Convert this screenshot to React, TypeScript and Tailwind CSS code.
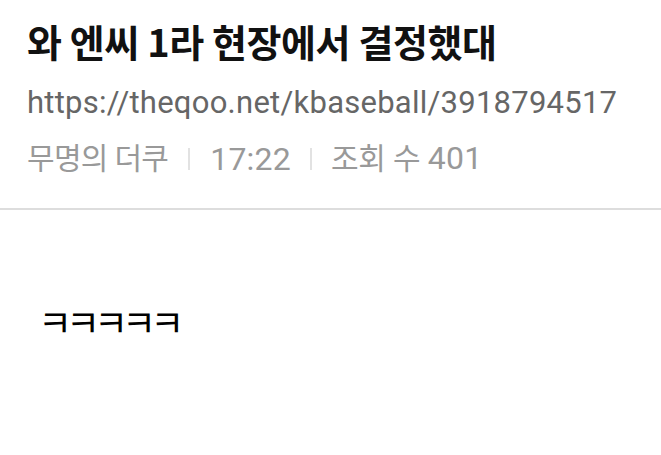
export default function App() {
  const sans = "font-['Roboto','Noto_Sans_CJK_KR',sans-serif]";
  return (
    <div className="h-[455px] w-[661px] overflow-hidden bg-white">
      <div className="px-[27px] pt-[15px] pb-[29px]">
        <h1 className="font-['Noto_Sans_CJK_KR',sans-serif] text-[38px] font-bold leading-[52px] tracking-[-0.4px] text-[#111]">
          와 엔씨 1라 현장에서 결정했대
        </h1>
        <div className={`${sans} mt-[16px] text-[31px] leading-[40px] tracking-[0.25px] text-[#666]`}>
          https://theqoo.net/kbaseball/3918794517
        </div>
        <div className={`${sans} mt-[15px] flex items-center text-[30px] leading-[40px] text-[#999]`}>
          <span className="tracking-[-0.7px]">무명의 더쿠</span>
          <span className="mx-[20px] h-[22px] w-[2px] bg-[#e2e2e2]" />
          <span className="text-[32px] tracking-[0.2px]">17:22</span>
          <span className="mx-[19px] h-[22px] w-[2px] bg-[#e2e2e2]" />
          <span className="tracking-[-0.2px]">
            조회 수 <span className="text-[32px] tracking-[0.3px]">401</span>
          </span>
        </div>
      </div>
      <div className="h-[2px] bg-[#dddddd]" />
      <div className="px-[38px] pt-[91px] font-['Noto_Sans_CJK_KR',sans-serif] text-[37px] leading-[40px] tracking-[-6px] text-black">
        ㅋㅋㅋㅋㅋ
      </div>
    </div>
  );
}
